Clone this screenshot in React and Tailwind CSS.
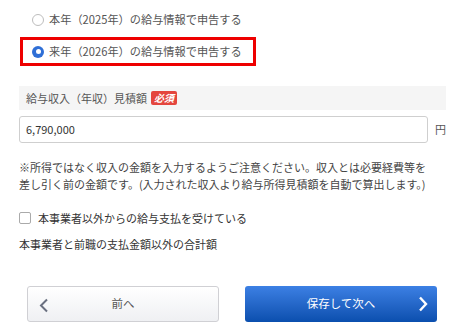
import React from 'react';

const jp = { fontFamily: '"Noto Sans CJK JP", "Noto Sans", sans-serif' };

const Radio = ({ checked, label, highlight }) => (
  <div
    className={`flex items-center h-[29px] w-[236px] border-[3px] pl-[9px] ${
      highlight ? 'border-[#ee0000]' : 'border-transparent'
    }`}
  >
    {checked ? (
      <span className="w-[12px] h-[12px] rounded-full bg-[#2f6fd6] flex items-center justify-center">
        <span className="w-[5px] h-[5px] rounded-full bg-white" />
      </span>
    ) : (
      <span className="w-[12px] h-[12px] rounded-full border border-[#bdbdbd] bg-white" />
    )}
    <span className="ml-[5px] text-[11.2px] text-[#555]">{label}</span>
  </div>
);

const App = () => {
  return (
    <div className="w-[462px] h-[331px] bg-white overflow-hidden" style={jp}>
      <div className="pl-[20px] pr-[16px] pt-[5px]">
        {/* 申告年の選択 */}
        <div className="flex flex-col gap-[3px]">
          <Radio label="本年（2025年）の給与情報で申告する" />
          <Radio checked highlight label="来年（2026年）の給与情報で申告する" />
        </div>

        {/* 給与収入 */}
        <div className="mt-[20px] -ml-[1px] h-[24px] bg-[#f5f5f5] flex items-center pl-[7px]">
          <span className="text-[11px] text-[#555]">給与収入（年収）見積額</span>
          <span className="ml-[4px] h-[14px] px-[3px] rounded-[2px] bg-[#e4463e] text-white text-[10px] font-bold leading-[14px] italic">
            必須
          </span>
        </div>

        <div className="mt-[6px] -ml-[1px] flex items-center">
          <div className="w-[411px] h-[27px] border border-[#cfcfcf] rounded-[3px] flex items-center pl-[6px] text-[11px] text-[#333]">
            6,790,000
          </div>
          <span className="ml-[7px] text-[11px] text-[#555]">円</span>
        </div>

        <p className="mt-[16px] -ml-[1px] text-[11px] leading-[17px] text-[#444]">
          ※所得ではなく収入の金額を入力するようご注意ください。収入とは必要経費等を
          <br />
          差し引く前の金額です。(入力された収入より給与所得見積額を自動で算出します。)
        </p>

        <label className="mt-[17px] -ml-[1px] flex items-center">
          <span className="w-[12px] h-[12px] rounded-[2px] border border-[#aaa] bg-white" />
          <span className="ml-[7px] text-[11px] text-[#333]">本事業者以外からの給与支払を受けている</span>
        </label>

        <p className="mt-[9px] -ml-[1px] text-[11px] text-[#333]">本事業者と前職の支払金額以外の合計額</p>

        {/* ボタン */}
        <div className="mt-[34px] ml-[7px] flex gap-[26px]">
          <button className="relative w-[192px] h-[36px] rounded-[3px] border border-[#d0d0d4] bg-gradient-to-b from-white to-[#eff0f3] flex items-center justify-center text-[11.5px] text-[#555]">
            <svg className="absolute left-[11px] top-[11px]" width="10" height="15" viewBox="0 0 10 15">
              <path d="M8 1.5 L2 7.5 L8 13.5" fill="none" stroke="#6a7080" strokeWidth="2" />
            </svg>
            前へ
          </button>
          <button className="relative w-[192px] h-[36px] rounded-[3px] bg-gradient-to-b from-[#3c80e4] to-[#0a4fae] flex items-center justify-center text-[11.5px] text-white">
            保存して次へ
            <svg className="absolute right-[9px] top-[10px]" width="10" height="16" viewBox="0 0 10 16">
              <path d="M2 1.5 L8 8 L2 14.5" fill="none" stroke="white" strokeWidth="2.4" />
            </svg>
          </button>
        </div>
      </div>
    </div>
  );
};

export default App;
